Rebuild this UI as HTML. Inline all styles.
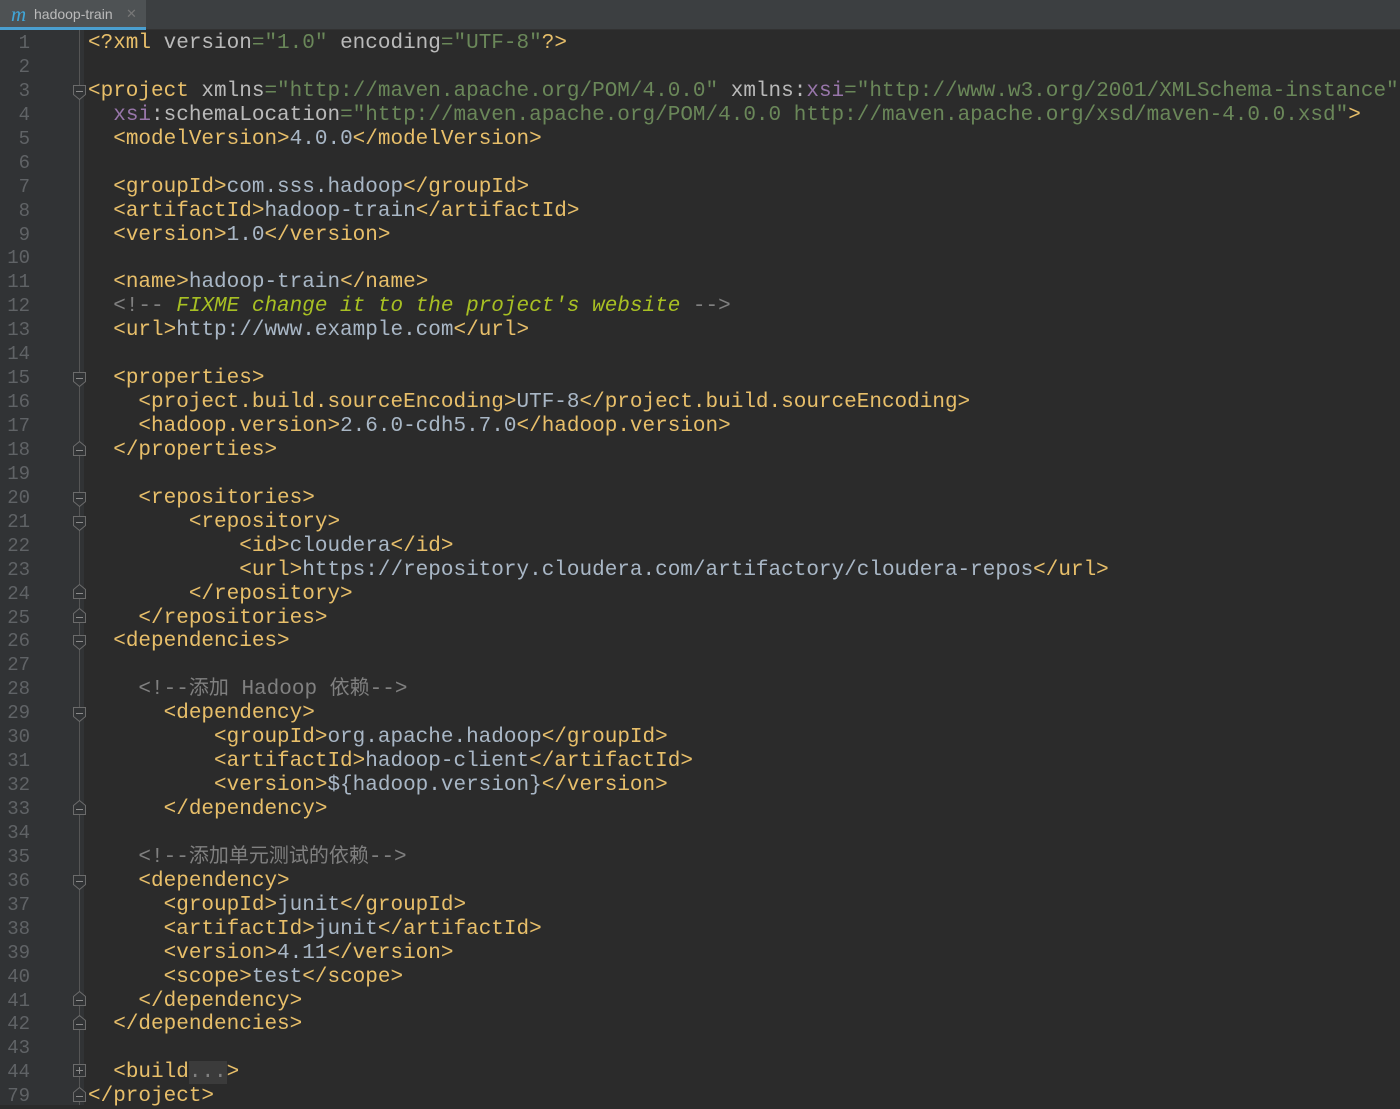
<!DOCTYPE html>
<html><head><meta charset="utf-8">
<style>
html,body{margin:0;padding:0;}
body{width:1400px;height:1105px;background:#2b2b2b;overflow:hidden;position:relative;font-family:"Liberation Mono","Noto Sans CJK SC",monospace;}
#tabbar{position:absolute;left:0;top:0;width:1400px;height:30px;background:#3c3f41;border-bottom:1px solid #323232;box-sizing:border-box;}
#tab{position:absolute;left:0;top:0;width:146px;height:30px;background:#4e5254;}
#tab .u{position:absolute;left:0;bottom:0;width:146px;height:3px;background:#4a9fd0;}
#tab .m{position:absolute;left:11px;top:2px;font:italic 21px "Liberation Serif",serif;color:#40a6d8;}
#tab .t{position:absolute;left:34px;top:6px;font:14px "Liberation Sans",sans-serif;color:#bbbbbb;}
#tab .x{position:absolute;left:126px;top:6px;font:13px "Liberation Sans",sans-serif;color:#777;}
#gutter{position:absolute;left:0;top:30px;width:84px;height:1075px;background:#313335;}
#gline{position:absolute;left:79px;top:30px;width:1px;height:1075px;background:#555;}
#nums{position:absolute;left:0;top:32px;width:30px;text-align:right;font-size:19px;line-height:23.93px;color:#606366;margin:0;}
pre#code{position:absolute;left:88px;top:32px;margin:0;font-size:21px;line-height:23.93px;color:#a9b7c6;white-space:pre;}
.g{color:#e8bf6a}.s{color:#6a8759}.a{color:#bababa}.p{color:#9876aa}.c{color:#808080}.f{color:#a8c023;font-style:italic}
.z{font-size:20px}
.dots{background:#3b3b3b;color:#808080}
</style></head><body>
<div id="tabbar"><div id="tab"><span class="m">m</span><span class="t">hadoop-train</span><span class="x">✕</span><div class="u"></div></div></div>
<div id="gutter"></div><div id="gline"></div>
<pre id="nums">1
2
3
4
5
6
7
8
9
10
11
12
13
14
15
16
17
18
19
20
21
22
23
24
25
26
27
28
29
30
31
32
33
34
35
36
37
38
39
40
41
42
43
44
79</pre>
<svg style="position:absolute;left:0;top:0" width="90" height="1105">
<g fill="#313335" stroke="#6b6b6b" stroke-width="1">
<path d="M73.5 85.5h12v9l-6 5l-6-5z"/>
<path d="M73.5 372.5h12v9l-6 5l-6-5z"/>
<path d="M73.5 492.5h12v9l-6 5l-6-5z"/>
<path d="M73.5 516.5h12v9l-6 5l-6-5z"/>
<path d="M73.5 635.5h12v9l-6 5l-6-5z"/>
<path d="M73.5 707.5h12v9l-6 5l-6-5z"/>
<path d="M73.5 875.5h12v9l-6 5l-6-5z"/>
<path d="M73.5 455.5h12v-9l-6-5l-6 5z"/>
<path d="M73.5 598.5h12v-9l-6-5l-6 5z"/>
<path d="M73.5 622.5h12v-9l-6-5l-6 5z"/>
<path d="M73.5 814.5h12v-9l-6-5l-6 5z"/>
<path d="M73.5 1005.5h12v-9l-6-5l-6 5z"/>
<path d="M73.5 1029.5h12v-9l-6-5l-6 5z"/>
<path d="M73.5 1101.5h12v-9l-6-5l-6 5z"/>
<rect x="73.5" y="1064.5" width="12" height="12"/>
</g>
<g stroke="#8a8a8a" stroke-width="1">
<path d="M76 91.5h7M76 378.5h7M76 498.5h7M76 522.5h7M76 641.5h7M76 713.5h7M76 881.5h7M76 450.5h7M76 593.5h7M76 617.5h7M76 809.5h7M76 1000.5h7M76 1024.5h7M76 1096.5h7M76 1070.5h7M79.5 1067v7"/>
</g>
</svg>
<pre id="code"><span class="g">&lt;?xml </span><span class="a">version</span><span class="s">="1.0" </span><span class="a">encoding</span><span class="s">="UTF-8"</span><span class="g">?&gt;</span>

<span class="g">&lt;project </span><span class="a">xmlns</span><span class="s">="http://maven.apache.org/POM/4.0.0" </span><span class="a">xmlns:</span><span class="p">xsi</span><span class="s">="http://www.w3.org/2001/XMLSchema-instance"</span>
  <span class="p">xsi</span><span class="a">:schemaLocation</span><span class="s">="http://maven.apache.org/POM/4.0.0 http://maven.apache.org/xsd/maven-4.0.0.xsd"</span><span class="g">&gt;</span>
  <span class="g">&lt;modelVersion&gt;</span>4.0.0<span class="g">&lt;/modelVersion&gt;</span>

  <span class="g">&lt;groupId&gt;</span>com.sss.hadoop<span class="g">&lt;/groupId&gt;</span>
  <span class="g">&lt;artifactId&gt;</span>hadoop-train<span class="g">&lt;/artifactId&gt;</span>
  <span class="g">&lt;version&gt;</span>1.0<span class="g">&lt;/version&gt;</span>

  <span class="g">&lt;name&gt;</span>hadoop-train<span class="g">&lt;/name&gt;</span>
  <span class="c">&lt;!-- </span><span class="f">FIXME change it to the project's website</span><span class="c"> --&gt;</span>
  <span class="g">&lt;url&gt;</span>http://www.example.com<span class="g">&lt;/url&gt;</span>

  <span class="g">&lt;properties&gt;</span>
    <span class="g">&lt;project.build.sourceEncoding&gt;</span>UTF-8<span class="g">&lt;/project.build.sourceEncoding&gt;</span>
    <span class="g">&lt;hadoop.version&gt;</span>2.6.0-cdh5.7.0<span class="g">&lt;/hadoop.version&gt;</span>
  <span class="g">&lt;/properties&gt;</span>

    <span class="g">&lt;repositories&gt;</span>
        <span class="g">&lt;repository&gt;</span>
            <span class="g">&lt;id&gt;</span>cloudera<span class="g">&lt;/id&gt;</span>
            <span class="g">&lt;url&gt;</span>https://repository.cloudera.com/artifactory/cloudera-repos<span class="g">&lt;/url&gt;</span>
        <span class="g">&lt;/repository&gt;</span>
    <span class="g">&lt;/repositories&gt;</span>
  <span class="g">&lt;dependencies&gt;</span>

    <span class="c">&lt;!--<span class="z">添加</span> Hadoop <span class="z">依赖</span>--&gt;</span>
      <span class="g">&lt;dependency&gt;</span>
          <span class="g">&lt;groupId&gt;</span>org.apache.hadoop<span class="g">&lt;/groupId&gt;</span>
          <span class="g">&lt;artifactId&gt;</span>hadoop-client<span class="g">&lt;/artifactId&gt;</span>
          <span class="g">&lt;version&gt;</span>${hadoop.version}<span class="g">&lt;/version&gt;</span>
      <span class="g">&lt;/dependency&gt;</span>

    <span class="c">&lt;!--<span class="z">添加单元测试的依赖</span>--&gt;</span>
    <span class="g">&lt;dependency&gt;</span>
      <span class="g">&lt;groupId&gt;</span>junit<span class="g">&lt;/groupId&gt;</span>
      <span class="g">&lt;artifactId&gt;</span>junit<span class="g">&lt;/artifactId&gt;</span>
      <span class="g">&lt;version&gt;</span>4.11<span class="g">&lt;/version&gt;</span>
      <span class="g">&lt;scope&gt;</span>test<span class="g">&lt;/scope&gt;</span>
    <span class="g">&lt;/dependency&gt;</span>
  <span class="g">&lt;/dependencies&gt;</span>

  <span class="g">&lt;build</span><span class="dots">...</span><span class="g">&gt;</span>
<span class="g">&lt;/project&gt;</span></pre>
</body></html>
